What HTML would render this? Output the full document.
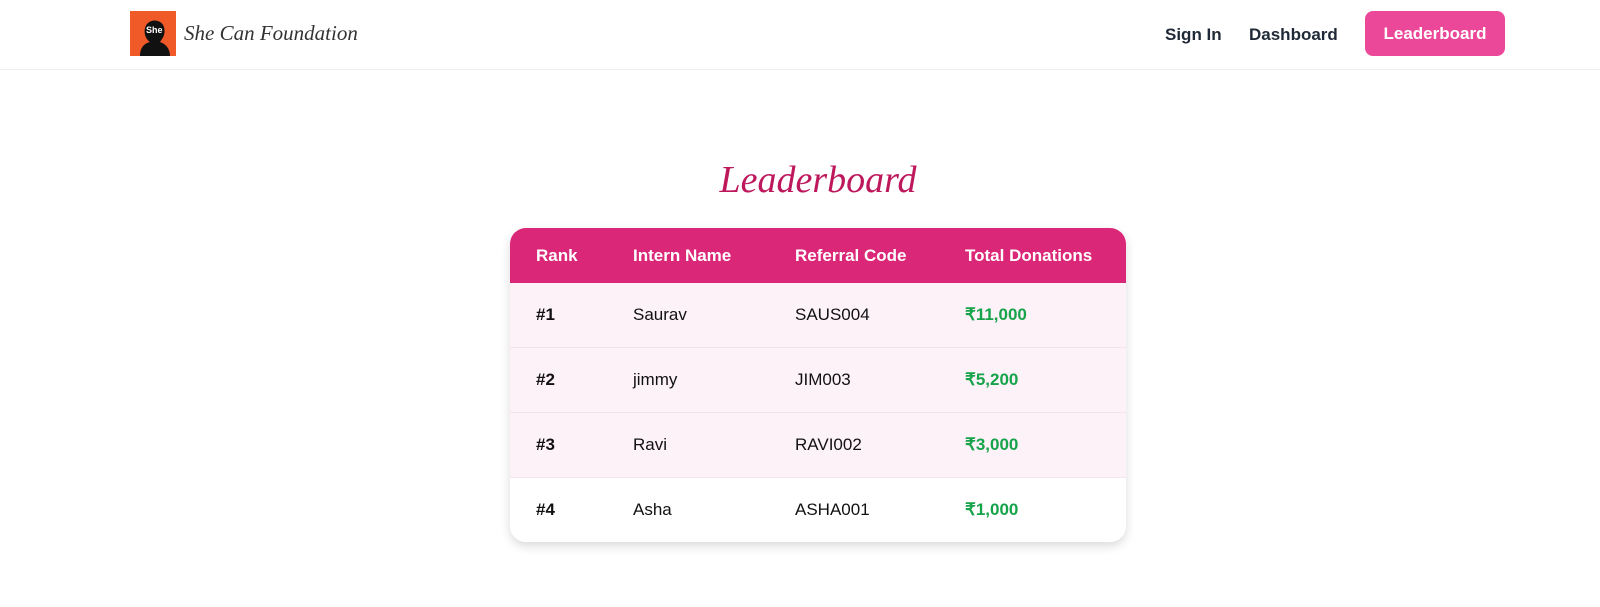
<!DOCTYPE html>
<html><head><meta charset="utf-8"><style>
body{margin:0;background:#fff;font-family:"Liberation Sans",sans-serif;width:1600px;height:607px;overflow:hidden;position:relative}
.nav{position:absolute;left:0;top:0;width:1600px;height:70px;border-bottom:1px solid #eee;box-sizing:border-box}
.logo{position:absolute;left:130px;top:11px;width:46px;height:45px;background:#f05a28}
.brand{position:absolute;left:184px;top:21px;font-family:"Liberation Serif",serif;font-style:italic;font-size:21px;color:#333}
.nl{position:absolute;top:25px;font-size:17px;font-weight:bold;color:#1f2937}
.btn{position:absolute;left:1365px;top:11px;width:140px;height:45px;background:#ec4899;border-radius:8px;color:#fff;font-weight:bold;font-size:17px;line-height:45px;text-align:center}
h1{position:absolute;left:0;width:1636px;top:158px;margin:0;text-align:center;font-family:"Liberation Serif",serif;font-style:italic;font-weight:normal;font-size:38px;color:#be185d}
.tbl{position:absolute;left:510px;top:228px;width:616px;border-radius:16px;overflow:hidden;box-shadow:0 4px 10px rgba(0,0,0,.15)}
.r{height:64px;position:relative;border-top:1px solid #f3e3ec;background:#fdf2f8;font-size:17px;color:#111}
.r.h{height:55px;background:#db2777;color:#fff;font-weight:bold;border:none}
.r span{position:absolute;top:50%;transform:translateY(-50%)}
.c1{left:26px}.c2{left:123px}.c3{left:285px}.c4{left:455px}
.r:not(.h) .c1{font-weight:bold}
.r:not(.h) .c4{color:#16a34a;font-weight:bold}
</style></head><body>
<div class="nav">
<div class="logo"><svg width="46" height="45"><path d="M10 45 C10 35 16 32 20 31 C14 27 13 18 17 13 C22 7 32 9 34 16 C36 24 32 28 30 31 C36 33 40 38 40 45Z" fill="#111"/><text x="16" y="22" font-size="9" fill="#fff" font-weight="bold" font-family="Liberation Sans">She</text></svg></div>
<div class="brand">She Can Foundation</div>
<div class="nl" style="left:1165px">Sign In</div>
<div class="nl" style="left:1249px">Dashboard</div>
<div class="btn">Leaderboard</div>
</div>
<h1>Leaderboard</h1>
<div class="tbl">
<div class="r h"><span class="c1">Rank</span><span class="c2">Intern Name</span><span class="c3">Referral Code</span><span class="c4">Total Donations</span></div>
<div class="r" style="border-top:none"><span class="c1">#1</span><span class="c2">Saurav</span><span class="c3">SAUS004</span><span class="c4">₹11,000</span></div>
<div class="r"><span class="c1">#2</span><span class="c2">jimmy</span><span class="c3">JIM003</span><span class="c4">₹5,200</span></div>
<div class="r"><span class="c1">#3</span><span class="c2">Ravi</span><span class="c3">RAVI002</span><span class="c4">₹3,000</span></div>
<div class="r" style="background:#fff"><span class="c1">#4</span><span class="c2">Asha</span><span class="c3">ASHA001</span><span class="c4">₹1,000</span></div>
</div>
</body></html>
